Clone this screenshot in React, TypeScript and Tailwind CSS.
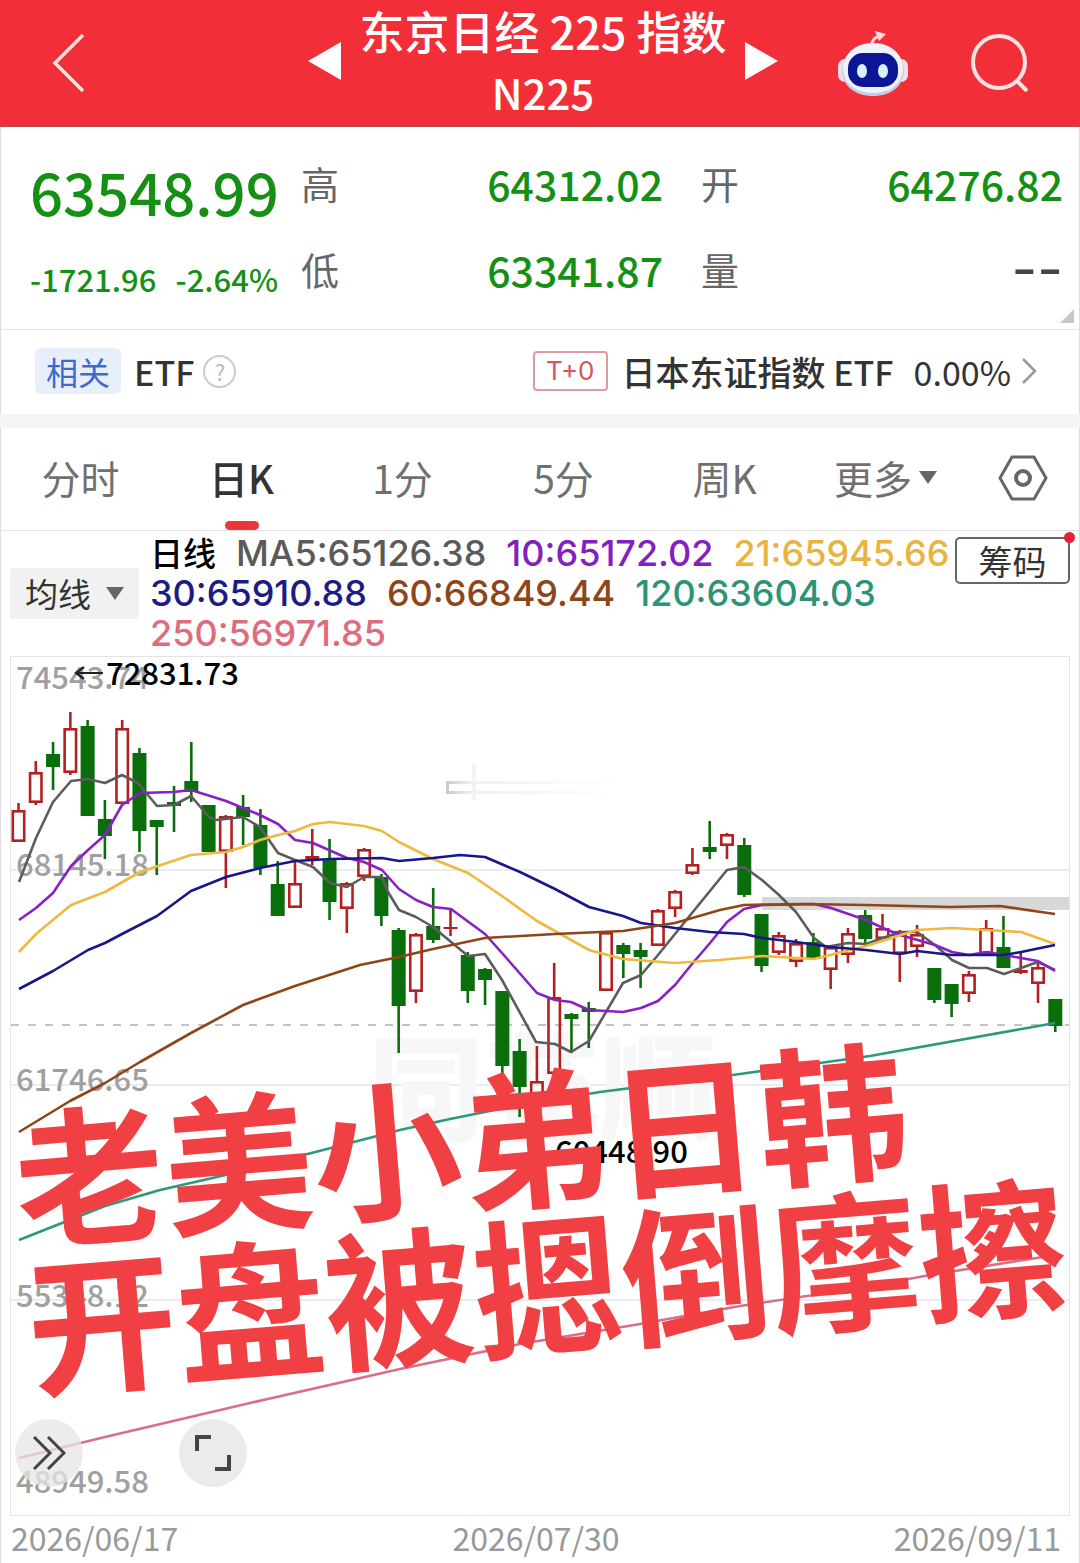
import React from 'react';

type Candle = [up: 0 | 1, high: number, top: number, bottom: number, low: number];

const FIRST_X = 18.5;
const STEP_X = 17.28;

// 1 = rising (hollow red), 0 = falling (solid green)
const candles: Candle[] = [
  [1, 803, 810, 842, 842], [1, 761, 772, 803, 805], [0, 742, 754, 767, 790],
  [1, 712, 728, 773, 775], [0, 720, 726, 816, 816], [0, 800, 819, 836, 859],
  [1, 720, 728, 804, 804], [0, 748, 753, 831, 852], [0, 820, 820, 827, 875],
  [0, 786, 802, 806, 832], [0, 742, 781, 792, 802], [0, 805, 805, 852, 852],
  [1, 815, 816, 852, 888], [0, 795, 807, 817, 845], [0, 809, 825, 868, 875],
  [0, 861, 884, 916, 916], [1, 862, 883, 908, 908], [1, 829, 856, 859, 865],
  [0, 839, 859, 902, 920], [1, 882, 883, 909, 933], [1, 848, 849, 877, 881],
  [0, 874, 877, 916, 926], [0, 928, 930, 1006, 1053], [1, 933, 934, 992, 1003],
  [0, 888, 926, 940, 943], [1, 908, 927, 929, 936], [0, 952, 955, 991, 1003],
  [0, 968, 969, 980, 1005], [0, 991, 991, 1066, 1073], [0, 1039, 1051, 1087, 1117],
  [1, 1046, 1081, 1100, 1100], [1, 963, 997, 1074, 1074], [0, 1013, 1014, 1019, 1053],
  [0, 1002, 1008, 1012, 1048], [1, 932, 932, 991, 991], [0, 943, 945, 954, 978],
  [0, 943, 950, 957, 988], [1, 909, 910, 946, 946], [1, 890, 891, 909, 917],
  [1, 848, 864, 874, 875], [0, 821, 847, 852, 859], [1, 833, 834, 846, 859],
  [0, 838, 845, 895, 897], [0, 914, 914, 966, 972], [1, 932, 935, 953, 955],
  [1, 939, 943, 962, 967], [0, 933, 942, 959, 959], [1, 947, 947, 970, 989],
  [1, 928, 933, 955, 963], [0, 910, 915, 939, 947], [1, 914, 928, 939, 939],
  [1, 930, 931, 954, 982], [1, 925, 934, 947, 957], [0, 968, 968, 1000, 1003],
  [0, 984, 984, 1004, 1017], [1, 971, 974, 994, 1002], [1, 920, 928, 954, 954],
  [0, 916, 947, 968, 968], [1, 951, 970, 973, 974], [1, 962, 967, 984, 1003],
  [0, 999, 999, 1026, 1032]
];

const lines = [
  {
    name: 'ma120',
    color: '#2c9a78',
    points: '19,1240 105,1206 160,1190 230,1174 300,1156 400,1130 450,1119 520,1105 600,1092 740,1074 870,1056 1055,1023'
  },
  {
    name: 'ma250',
    color: '#d9708a',
    points: '19,1458 105,1437 250,1403 400,1369 520,1344 640,1324 740,1306 860,1288 930,1275 1055,1255'
  },
  {
    name: 'ma5',
    color: '#5c5c5c',
    points: '19,882 36,838 53,802 71,781 88,779 105,783 122,775 138,783 157,806 174,805 191,796 209,817 216,820 243,817 260,827 278,853 295,860 313,867 330,883 347,887 364,877 382,877 388,892 399,910 416,917 433,927 468,956 485,954 502,980 536,1042 555,1044 571,1052 589,1041 623,983 641,975 658,955 675,934 692,913 727,870 744,867 762,880 779,895 796,912 814,938 826,947 848,943 866,944 883,938 900,932 917,932 935,945 952,960 969,968 987,968 1004,974 1021,968 1038,962 1055,970'
  },
  {
    name: 'ma10',
    color: '#8a1fc4',
    points: '19,920 36,908 53,893 71,866 88,850 105,835 122,805 140,793 174,792 191,790 226,801 260,815 278,824 295,840 313,843 347,858 364,862 382,870 399,889 416,900 433,907 451,909 485,934 502,953 537,993 555,1000 571,1002 589,1010 623,1012 641,1008 658,1001 675,985 692,964 710,943 727,922 744,909 762,905 814,904 831,908 866,920 883,928 900,935 935,945 952,952 969,955 987,952 1021,958 1038,961 1055,971'
  },
  {
    name: 'ma21',
    color: '#efb940',
    points: '19,952 36,934 71,905 105,892 140,872 191,855 226,852 243,847 260,840 278,835 295,831 313,824 330,822 364,826 382,831 399,842 433,859 468,873 502,896 537,921 589,950 623,959 675,963 720,960 762,956 814,959 866,946 917,930 952,928 987,930 1021,932 1055,944'
  },
  {
    name: 'ma30',
    color: '#17178a',
    points: '19,989 53,971 88,950 105,943 122,934 157,916 191,891 226,877 260,868 295,861 330,859 382,858 399,861 433,858 460,855 485,857 520,872 555,889 589,907 623,916 641,923 675,928 710,932 744,934 762,938 796,942 831,947 866,950 900,954 917,951 952,955 1004,955 1021,952 1055,945'
  },
  {
    name: 'ma60',
    color: '#8f4518',
    points: '19,1132 70,1101 105,1083 140,1062 191,1033 243,1005 295,986 360,965 399,957 433,949 485,938 555,934 623,931 675,923 720,910 744,905 800,904 866,905 950,907 1000,906 1055,914'
  }
];

const priceLabels = [
  { y: 689, text: '74543.74' },
  { y: 876, text: '68145.18' },
  { y: 1091, text: '61746.65' },
  { y: 1307, text: '55348.12' },
  { y: 1493, text: '48949.58' }
];

const averages = [
  { text: 'MA5:65126.38', className: 'text-[#5a5a5a]' },
  { text: '10:65172.02', className: 'text-[#8420c0]' },
  { text: '21:65945.66', className: 'text-[#e9b340]' },
  { text: '30:65910.88', className: 'text-[#1c1c84]' },
  { text: '60:66849.44', className: 'text-[#8c461a]' },
  { text: '120:63604.03', className: 'text-[#2c9474]' },
  { text: '250:56971.85', className: 'text-[#de6c7c]' }
];

const tabs = ['分时', '日K', '1分', '5分', '周K'];

function RobotIcon() {
  return (
    <svg viewBox="0 0 72 68" className="w-[72px] h-[68px]" aria-hidden="true">
      <path d="M34 17 C35 11 38 8 43 7" fill="none" stroke="#ffd9dc" strokeWidth="3" />
      <path d="M38 2 L49 5 L42 12 Z" fill="#ffd9dc" />
      <rect x="1" y="30" width="14" height="23" rx="7" fill="#f3dfe8" />
      <rect x="57" y="30" width="14" height="23" rx="7" fill="#f3dfe8" />
      <path d="M36 15 C55 15 66 26 67 41 C67 57 54 67 36 67 C18 67 5 57 5 41 C6 26 17 15 36 15 Z" fill="#c3cde6" />
      <path d="M36 14 C54 14 65 25 66 39 C66 55 53 64 36 64 C19 64 6 55 6 39 C7 25 18 14 36 14 Z" fill="#eef2fb" />
      <rect x="11" y="24" width="50" height="34" rx="15" fill="#0b1596" />
      <ellipse cx="25" cy="42" rx="5" ry="7" fill="#d8f1ff" />
      <ellipse cx="46" cy="42" rx="5" ry="7" fill="#d8f1ff" />
    </svg>);

}

function QuoteItem({ label, value, empty }: {label: string;value: string;empty?: boolean;}) {
  return (
    <div className="flex items-center justify-between">
      <dt className="text-[38px] leading-[56px] text-[#666]">{label}</dt>
      <dd
        className={
        empty ?
        'text-[56px] leading-[56px] text-[#444] font-["Inter",sans-serif]' :
        'text-[41px] leading-[56px] font-medium text-[#159015]'
        }>
        {value}
      </dd>
    </div>);

}

function KLineChart() {
  return (
    <svg viewBox="11 657 1058 858" className="block w-full h-auto" role="img" aria-label="日K">
      <g stroke="#e6e6e6" strokeWidth="1.5">
        <line x1="11" x2="1069" y1="870" y2="870" />
        <line x1="11" x2="1069" y1="1085" y2="1085" />
        <line x1="11" x2="1069" y1="1300" y2="1300" />
      </g>

      {/* watermark */}
      <text x="368" y="1132" fontSize="116" fontWeight="900" fill="#f7f7f8">同花顺</text>
      <defs>
        <linearGradient id="fade">
          <stop offset="0" stopColor="#c9c9c9" />
          <stop offset="0.15" stopColor="#f0f0f0" />
          <stop offset="1" stopColor="#ffffff" />
        </linearGradient>
      </defs>
      <path d="M446 781 H620 V784 H449 V791 H620 V794 H446 Z" fill="url(#fade)" />
      <rect x="472" y="764" width="4" height="36" fill="#f3f3f3" />

      <rect x="762" y="897" width="307" height="13" fill="#d8d8d8" />
      <line x1="11" x2="1069" y1="1025" y2="1025" stroke="#c4c4b8" strokeWidth="2" strokeDasharray="8 9" />

      <g fontSize="31" fontWeight="500" fill="#a0a0a0">
        {priceLabels.map((label) =>
        <text key={label.text} x="16" y={label.y}>{label.text}</text>
        )}
      </g>

      {candles.map(([up, high, top, bottom, low], i) => {
        const x = FIRST_X + i * STEP_X;
        const flat = bottom - top < 5;
        const color = up ? '#b3201f' : '#0a6e0c';
        return (
          <g key={i} stroke={color} strokeWidth="2.6" fill={color}>
            <line x1={x} x2={x} y1={high} y2={top} />
            <line x1={x} x2={x} y1={bottom} y2={low} />
            {up && !flat ?
            <rect x={x - 5.7} y={top + 1.3} width="11.4" height={bottom - top - 2.6} fill="none" /> :
            <rect x={x - 7} y={top} width="14" height={bottom - top} stroke="none" />
            }
          </g>);

      })}

      {lines.map((line) =>
      <polyline
        key={line.name}
        points={line.points}
        fill="none"
        stroke={line.color}
        strokeWidth="2.6"
        strokeLinejoin="round" />
      )}

      <path d="M103 673 H76 M84 667 L76 673 L84 679" fill="none" stroke="#222" strokeWidth="2.2" />
      <g fontSize="31" fontWeight="500" fill="#000">
        <text x="106" y="685">72831.73</text>
        <text x="555" y="1163">60448.90</text>
      </g>
    </svg>);

}

export default function App() {
  return (
    <main className='flex flex-col bg-white border-b border-[#ddd] shadow-[inset_1px_0_#dddddd,inset_-1px_0_#dddddd] text-[#333] font-["Noto_Sans_CJK_SC",sans-serif]'>
      <header className="grid grid-cols-[1fr_auto_1fr] items-center h-[127px] pl-[6px] bg-[#f22f38] border-b border-[#b5474c] text-white">
        <button type="button" aria-label="返回" className="justify-self-start pl-[46px]">
          <svg viewBox="0 0 34 60" className="w-[34px] h-[60px]">
            <path d="M31 2 L3 30 L31 58" fill="none" stroke="#ffe3e3" strokeWidth="3.5" />
          </svg>
        </button>

        <div className="flex items-center gap-[18px] pb-[4px]">
          <button type="button" aria-label="上一个">
            <svg viewBox="0 0 33 38" className="w-[33px] h-[38px]">
              <path d="M33 0 V38 L0 19 Z" fill="#fff" />
            </svg>
          </button>
          <div className="text-center font-medium">
            <h1 className="text-[45px] leading-[61px]">东京日经 225 指数</h1>
            <p className="text-[42px] leading-[61px]">N225</p>
          </div>
          <button type="button" aria-label="下一个">
            <svg viewBox="0 0 33 38" className="w-[33px] h-[38px]">
              <path d="M0 0 V38 L33 19 Z" fill="#fff" />
            </svg>
          </button>
        </div>

        <div className="flex items-center justify-end gap-[62px] pr-[51px]">
          <button type="button" aria-label="智能助手">
            <RobotIcon />
          </button>
          <button type="button" aria-label="搜索">
            <svg viewBox="0 0 58 58" className="w-[58px] h-[58px]" fill="none" stroke="#ffe3e3" strokeWidth="4">
              <circle cx="28" cy="28" r="26" />
              <path d="M45 46 L56 57" />
            </svg>
          </button>
        </div>
      </header>

      <section className="relative flex gap-[23px] h-[203px] pt-[28px] pl-[30px] pr-[17px] border-b border-[#e4e4e4]">
        <div className="w-[248px] text-[#159015] font-medium">
          <p className="text-[58px] leading-[72px]">63548.99</p>
          <p className="flex justify-between pt-[22px] text-[31px] leading-[60px]">
            <span>-1721.96</span>
            <span>-2.64%</span>
          </p>
        </div>
        <dl className="flex-1 grid grid-cols-2 content-start gap-x-[38px] gap-y-[30px]">
          <QuoteItem label="高" value="64312.02" />
          <QuoteItem label="开" value="64276.82" />
          <QuoteItem label="低" value="63341.87" />
          <QuoteItem label="量" value="--" empty />
        </dl>
        <svg viewBox="0 0 14 14" className="absolute right-[6px] bottom-[6px] w-[14px] h-[14px]" aria-hidden="true">
          <path d="M14 0 V14 H0 Z" fill="#c8c8c8" />
        </svg>
      </section>

      <section className="flex items-center h-[84px] pb-[2px] pl-[35px] pr-[43px]">
        <span className="px-[11px] rounded-[6px] bg-[#e8effc] text-[32px] leading-[46px] text-[#3c6ad0]">相关</span>
        <span className="pl-[13px] text-[34px] font-medium">ETF</span>
        <button
          type="button"
          aria-label="帮助"
          className="ml-[9px] size-[33px] rounded-full border-2 border-[#ccc] text-[22px] leading-[28px] text-[#bbb]">
          ?
        </button>
        <a href="#etf" className="ml-auto flex items-center">
          <span className='px-[11px] rounded-[4px] border-2 border-[#e09a9e] font-["Inter",sans-serif] text-[26px] leading-[36px] text-[#d95558]'>T+0</span>
          <span className="pl-[14px] text-[34px] font-medium">日本东证指数 ETF</span>
          <span className="pl-[20px] text-[34px]">0.00%</span>
          <svg viewBox="0 0 16 28" className="ml-[10px] w-[16px] h-[28px]" aria-hidden="true">
            <path d="M2 2 L14 14 L2 26" fill="none" stroke="#999" strokeWidth="2.5" />
          </svg>
        </a>
      </section>
      <div className="h-[14px] bg-[#f5f5f5]" />

      <nav className="grid grid-cols-[repeat(6,161fr)_114fr] h-[103px] border-b border-[#e4e4e4] text-[39px] text-[#707070]">
        {tabs.map((tab) =>
        <button
          key={tab}
          type="button"
          className={tab === '日K' ? 'relative pb-[4px] font-medium text-[#333]' : 'pb-[4px]'}>
            {tab}
            {tab === '日K' &&
          <span className="absolute bottom-0 left-1/2 -translate-x-1/2 w-[34px] h-[9px] rounded-full bg-[#e8383a]" />
          }
          </button>
        )}
        <button type="button" aria-haspopup="menu" className="flex items-center justify-center gap-[7px] pb-[4px]">
          更多
          <svg viewBox="0 0 18 13" className="w-[18px] h-[13px]">
            <path d="M0 0 H18 L9 13 Z" fill="#666" />
          </svg>
        </button>
        <button type="button" aria-label="设置" className="flex items-center justify-center pb-[2px]">
          <svg viewBox="0 0 50 46" className="w-[50px] h-[46px]" fill="none" stroke="#666">
            <path d="M14 2 H36 L48 23 L36 44 H14 L2 23 Z" strokeWidth="3" strokeLinejoin="round" />
            <circle cx="25" cy="23" r="7" strokeWidth="4" />
          </svg>
        </button>
      </nav>

      <section className="flex items-start h-[125px] px-[10px]">
        <div className="relative mt-[37px] w-[129px] shrink-0">
          <select
            aria-label="指标"
            className="appearance-none w-full h-[51px] pl-[15px] rounded-[3px] bg-[#f1f1f1] text-[33px] leading-[51px]">
            <option>均线</option>
          </select>
          <svg viewBox="0 0 18 13" className="pointer-events-none absolute right-[15px] top-[19px] w-[18px] h-[13px]">
            <path d="M0 0 H18 L9 13 Z" fill="#666" />
          </svg>
        </div>
        <div className='flex-1 flex flex-wrap gap-x-[20px] pt-[2px] pl-[11px] font-["Inter",sans-serif] text-[36px] leading-[40px] font-medium'>
          <span className='text-[33px] leading-[38px] text-black font-["Noto_Sans_CJK_SC",sans-serif]'>日线</span>
          {averages.map((item) =>
          <span key={item.text} className={item.className}>{item.text}</span>
          )}
        </div>
        <button
          type="button"
          className="relative mt-[6px] w-[115px] h-[47px] shrink-0 rounded-[5px] border-2 border-[#666] text-[34px] leading-[38px]">
          筹码
          <span className="absolute -right-[7px] -top-[7px] size-[11px] rounded-full bg-[#e0223a]" />
        </button>
      </section>

      <section className="relative mx-[10px] border border-[#e4e4e4]">
        <KLineChart />
        <button
          type="button"
          aria-label="展开"
          className="absolute left-[4px] bottom-[28px] size-[68px] rounded-full bg-[#e6e6e6]/75 flex items-center justify-center">
          <svg viewBox="0 0 34 34" className="w-[34px] h-[34px]" fill="none" stroke="#444" strokeWidth="3">
            <path d="M2 1 L18 17 L2 33 M16 1 L32 17 L16 33" />
          </svg>
        </button>
        <button
          type="button"
          aria-label="全屏"
          className="absolute left-[168px] bottom-[28px] size-[68px] rounded-full bg-[#ebebeb] flex items-center justify-center">
          <svg viewBox="0 0 36 36" className="w-[36px] h-[36px]" fill="none" stroke="#444" strokeWidth="4">
            <path d="M2 16 V2 H16 M34 20 V34 H20" />
          </svg>
        </button>
        <p className="absolute left-[8px] top-[400px] origin-center -rotate-[4.7deg] whitespace-nowrap text-[149px] leading-[148px] font-bold text-[#f04044]">
          老美小弟日韩
          <br />
          开盘被摁倒摩擦
        </p>
      </section>

      <footer className="flex justify-between h-[47px] pl-[11px] pr-[19px] text-[32px] leading-[43px] text-[#999]">
        <time>2026/06/17</time>
        <time>2026/07/30</time>
        <time>2026/09/11</time>
      </footer>
    </main>);

}
